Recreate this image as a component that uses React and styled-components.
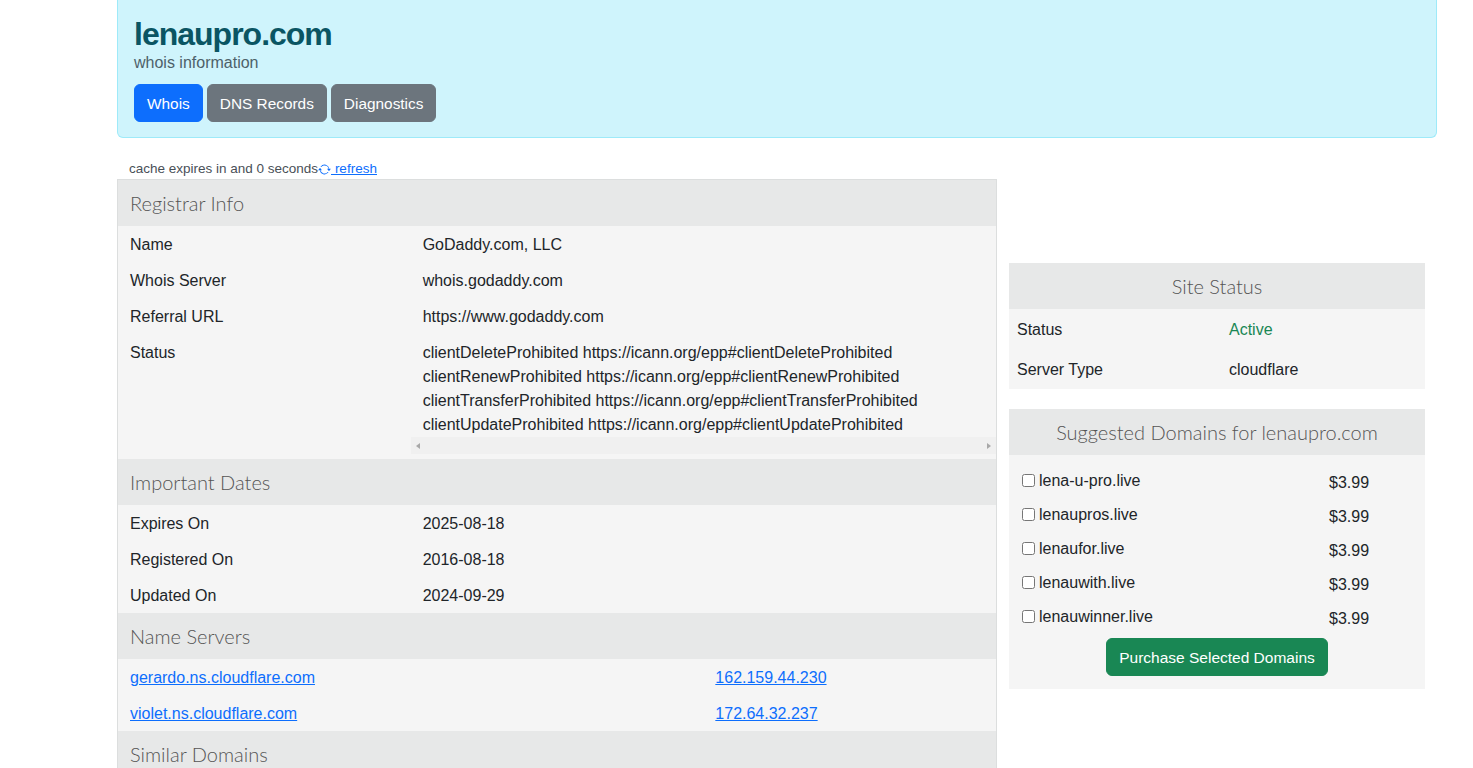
import styled, { createGlobalStyle } from "styled-components";
import { BsArrowRepeat } from "react-icons/bs";

const GlobalStyle = createGlobalStyle`
  html { scrollbar-width: none; }
  html::-webkit-scrollbar { display: none; }
  body {
    margin: 0;
    font-family: "Liberation Sans", Arial, sans-serif;
    font-size: 16px;
    color: #212529;
    background: #fff;
  }
  * { box-sizing: border-box; }
`;

const statusLines = [
  "clientDeleteProhibited https://icann.org/epp#clientDeleteProhibited",
  "clientRenewProhibited https://icann.org/epp#clientRenewProhibited",
  "clientTransferProhibited https://icann.org/epp#clientTransferProhibited",
  "clientUpdateProhibited https://icann.org/epp#clientUpdateProhibited",
];

const dates = [
  ["Expires On", "2025-08-18"],
  ["Registered On", "2016-08-18"],
  ["Updated On", "2024-09-29"],
];

const nameServers = [
  ["gerardo.ns.cloudflare.com", "162.159.44.230"],
  ["violet.ns.cloudflare.com", "172.64.32.237"],
];

const suggestions = [
  "lena-u-pro.live",
  "lenaupros.live",
  "lenaufor.live",
  "lenauwith.live",
  "lenauwinner.live",
];

const App = () => {
  return (
    <>
      <GlobalStyle />
      <Page>
        <Alert>
          <Title>lenaupro.com</Title>
          <Subtitle>whois information</Subtitle>
          <Tabs>
            <TabButton $active>Whois</TabButton>
            <TabButton>DNS Records</TabButton>
            <TabButton>Diagnostics</TabButton>
          </Tabs>
        </Alert>

        <CacheLine>
          cache expires in and 0 seconds
          <RefreshLink href="#">
            <BsArrowRepeat size={13} />
            <span>&nbsp;refresh</span>
          </RefreshLink>
        </CacheLine>

        <Columns>
          <Table>
            <SectionHead>Registrar Info</SectionHead>
            <Cell>Name</Cell>
            <Cell $span={2}>GoDaddy.com, LLC</Cell>
            <Cell>Whois Server</Cell>
            <Cell $span={2}>whois.godaddy.com</Cell>
            <Cell>Referral URL</Cell>
            <Cell $span={2}>https://www.godaddy.com</Cell>
            <Cell>Status</Cell>
            <ScrollCell>
              <ScrollText>
                {statusLines.map((l) => (
                  <div key={l}>{l}</div>
                ))}
              </ScrollText>
              <FakeScrollbar>
                <Arrow $dir="left" />
                <Arrow $dir="right" />
              </FakeScrollbar>
            </ScrollCell>

            <SectionHead>Important Dates</SectionHead>
            {dates.map(([k, v]) => (
              <Row key={k}>
                <Cell>{k}</Cell>
                <Cell $span={2}>{v}</Cell>
              </Row>
            ))}

            <SectionHead>Name Servers</SectionHead>
            {nameServers.map(([host, ip]) => (
              <Row key={host}>
                <Cell $span={2}>
                  <Link href="#">{host}</Link>
                </Cell>
                <Cell>
                  <Link href="#">{ip}</Link>
                </Cell>
              </Row>
            ))}

            <SectionHead>Similar Domains</SectionHead>
            <Cell $span={3}>&nbsp;</Cell>
          </Table>

          <Side>
            <AdSlot />
            <Card>
              <CardHead>Site Status</CardHead>
              <StatusBody>
                <StatusRow>
                  <span>Status</span>
                  <Active>Active</Active>
                </StatusRow>
                <StatusRow>
                  <span>Server Type</span>
                  <span>cloudflare</span>
                </StatusRow>
              </StatusBody>
            </Card>

            <Card $gap>
              <CardHead>Suggested Domains for lenaupro.com</CardHead>
              <SuggestBody>
                {suggestions.map((d) => (
                  <DomainRow key={d}>
                    <DomainLabel>
                      <input type="checkbox" />
                      {d}
                    </DomainLabel>
                    <Price>$3.99</Price>
                  </DomainRow>
                ))}
                <PurchaseButton>Purchase Selected Domains</PurchaseButton>
              </SuggestBody>
            </Card>
          </Side>
        </Columns>
      </Page>
    </>
  );
};

export default App;

const Page = styled.div`
  width: 1437px;
  padding-left: 117px;
`;

const Alert = styled.div`
  background: #cff4fc;
  border: 1px solid #9eeaf9;
  border-top: none;
  border-radius: 0 0 6px 6px;
  padding: 17px 16px 15px 16px;
  color: #055160;
`;

const Title = styled.h1`
  margin: 0;
  font-size: 32px;
  font-weight: 700;
  letter-spacing: -1px;
  line-height: 35px;
  color: #0a5563;
`;

const Subtitle = styled.div`
  font-size: 16px;
  line-height: 19px;
  padding-top: 1px;
  color: #4d6169;
`;

const Tabs = styled.div`
  display: flex;
  gap: 4px;
  margin-top: 12px;
`;

const TabButton = styled.button`
  font-family: "Liberation Sans", Arial, sans-serif;
  font-size: 15.4px;
  line-height: 24px;
  padding: 7px 12px 5px 12px;
  border: 1px solid ${(p) => (p.$active ? "#0d6efd" : "#6c757d")};
  border-radius: 6px;
  background: ${(p) => (p.$active ? "#0d6efd" : "#6c757d")};
  color: #fff;
  cursor: pointer;
`;

const CacheLine = styled.div`
  margin-top: 21px;
  padding-left: 12px;
  font-size: 13.5px;
  line-height: 20px;
  color: #495057;
  display: flex;
  align-items: center;
`;

const RefreshLink = styled.a`
  display: inline-flex;
  align-items: center;
  color: #0d6efd;
  > span {
    text-decoration: underline;
  }
`;

const Columns = styled.div`
  display: flex;
  align-items: flex-start;
`;

const Table = styled.div`
  width: 880px;
  display: grid;
  grid-template-columns: 1fr 1fr 1fr;
  border: 1px solid #dcdede;
  border-bottom: none;
  background: #f5f5f5;
`;

const Row = styled.div`
  display: contents;
`;

const SectionHead = styled.div`
  grid-column: 1 / -1;
  background: #e7e8e8;
  padding: 8px 12px;
  font-family: Lato, "Liberation Sans", sans-serif;
  font-weight: 300;
  font-size: 20px;
  line-height: 30px;
  color: #555;
`;

const Cell = styled.div`
  grid-column: span ${(p) => p.$span || 1};
  padding: 7px 12px 5px 12px;
  line-height: 24px;
  white-space: nowrap;
`;

const ScrollCell = styled.div`
  grid-column: span 2;
  padding: 7px 0 5px 0;
`;

const ScrollText = styled.div`
  padding: 0 12px;
  line-height: 24px;
  white-space: nowrap;
`;

const FakeScrollbar = styled.div`
  height: 17px;
  background: #f0f0f0;
  display: flex;
  justify-content: space-between;
  align-items: center;
  padding: 0 5px;
`;

const Arrow = styled.span`
  width: 0;
  height: 0;
  border-top: 3px solid transparent;
  border-bottom: 3px solid transparent;
  ${(p) =>
    p.$dir === "left"
      ? "border-right: 4px solid #a8a8a8;"
      : "border-left: 4px solid #a8a8a8;"}
`;

const Link = styled.a`
  color: #0d6efd;
  text-decoration: underline;
`;

const Side = styled.div`
  width: 440px;
  padding: 0 12px;
`;

const AdSlot = styled.div`
  height: 84px;
`;

const Card = styled.div`
  background: #f5f5f5;
  margin-top: ${(p) => (p.$gap ? "20px" : "0")};
`;

const CardHead = styled.div`
  background: #e7e8e8;
  padding: 8px 12px;
  text-align: center;
  font-family: Lato, "Liberation Sans", sans-serif;
  font-weight: 300;
  font-size: 20px;
  line-height: 30px;
  color: #555;
`;

const StatusBody = styled.div`
  display: flex;
  flex-direction: column;
`;

const StatusRow = styled.div`
  display: grid;
  grid-template-columns: 212px 1fr;
  padding: 9px 8px 7px 8px;
  line-height: 24px;
`;

const Active = styled.span`
  color: #198754;
`;

const SuggestBody = styled.div`
  padding: 8px 13px 13px 13px;
  display: flex;
  flex-direction: column;
`;

const DomainRow = styled.div`
  display: grid;
  grid-template-columns: 307px 1fr;
  align-items: center;
  height: 34px;
`;

const DomainLabel = styled.label`
  display: flex;
  align-items: center;
  line-height: 24px;
  padding-top: 1px;
  > input {
    margin: 0 4px 0 0;
    width: 13px;
    height: 13px;
  }
`;

const Price = styled.span`
  margin-top: 5px;
  line-height: 24px;
`;

const PurchaseButton = styled.button`
  align-self: center;
  margin-top: 5px;
  font-family: "Liberation Sans", Arial, sans-serif;
  font-size: 15.5px;
  line-height: 24px;
  padding: 7px 12px 5px 12px;
  border: 1px solid #198754;
  border-radius: 6px;
  background: #198754;
  color: #fff;
  cursor: pointer;
`;
